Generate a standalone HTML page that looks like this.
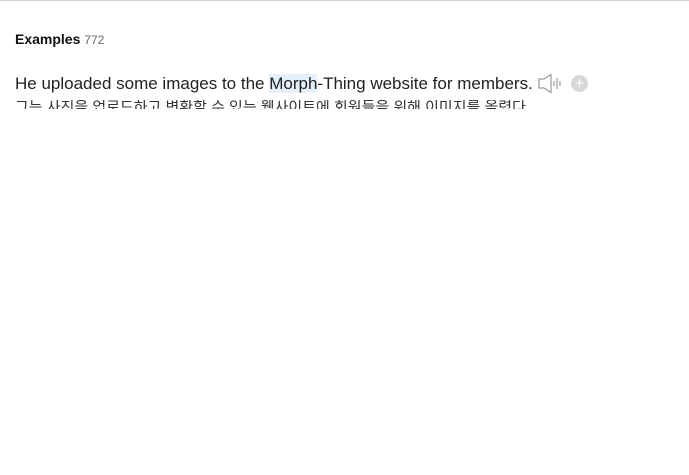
<!DOCTYPE html>
<html><head><meta charset="utf-8"><style>
body{margin:0;background:#fff;font-family:"Liberation Sans",Arial,sans-serif;width:689px;height:475px;overflow:hidden;border-top:1px solid #d0d0d0;box-sizing:border-box;position:relative}
.h{position:absolute;left:15px;top:30px;font-size:14px;font-weight:bold;color:#111}
.h span{font-weight:normal;font-size:12px;color:#666}
.s{position:absolute;left:15px;top:73px;font-size:17px;color:#222;white-space:nowrap}
.hl{background:#e6f0fa}
.k{position:absolute;left:15px;top:99px;height:9px;overflow:hidden;font-family:"Liberation Sans","Noto Sans CJK KR",sans-serif;font-size:15px;color:#333;white-space:nowrap;line-height:20px}
.k div{margin-top:-2px}
.plus{position:absolute;left:571px;top:74px;width:17px;height:17px;border-radius:50%;background:#d8d8d8;color:#fff;text-align:center;line-height:17px;font-size:15px}
</style></head><body>
<div class="h">Examples <span>772</span></div>
<div class="s">He uploaded some images to the <span class="hl">Morph</span>-Thing website for members.</div>
<svg style="position:absolute;left:538px;top:73px" width="24" height="19" viewBox="0 0 24 19"><path d="M1 5h5l7-4.5v18l-7-4.5H1z" fill="none" stroke="#999" stroke-width="1.2"/><path d="M16 7v5M19 4v11M22 7v5" stroke="#999" stroke-width="1.2"/></svg>
<div class="plus">+</div>
<div class="k"><div>그는 사진을 업로드하고 변환할 수 있는 웹사이트에 회원들을 위해 이미지를 올렸다</div></div>
</body></html>
